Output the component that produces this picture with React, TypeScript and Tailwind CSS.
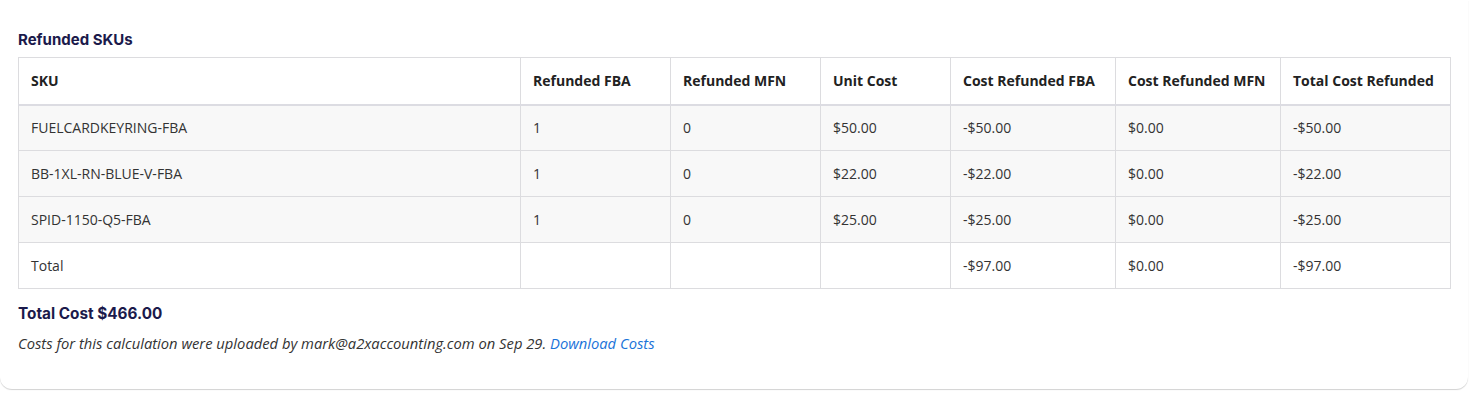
import React from 'react';

type Row = {
  sku: string;
  fba: string;
  mfn: string;
  unit: string;
  costFba: string;
  costMfn: string;
  total: string;
};

const rows: Row[] = [
  { sku: 'FUELCARDKEYRING-FBA', fba: '1', mfn: '0', unit: '$50.00', costFba: '-$50.00', costMfn: '$0.00', total: '-$50.00' },
  { sku: 'BB-1XL-RN-BLUE-V-FBA', fba: '1', mfn: '0', unit: '$22.00', costFba: '-$22.00', costMfn: '$0.00', total: '-$22.00' },
  { sku: 'SPID-1150-Q5-FBA', fba: '1', mfn: '0', unit: '$25.00', costFba: '-$25.00', costMfn: '$0.00', total: '-$25.00' },
];

const headers = [
  'SKU',
  'Refunded FBA',
  'Refunded MFN',
  'Unit Cost',
  'Cost Refunded FBA',
  'Cost Refunded MFN',
  'Total Cost Refunded',
];

const th = 'border border-[#dcdcdf] border-b-2 border-b-[#dcdce2] px-3 text-left font-bold text-[14px] text-[#222]';
const td = 'border border-[#dcdcdf] px-3 text-[14px] text-[#333]';

const App: React.FC = () => {
  return (
    <div className="min-h-screen bg-white font-['Open_Sans',sans-serif]">
      <section className="w-[1468px] bg-white rounded-b-xl shadow-[0_1px_1px_rgba(0,0,0,0.18)] pl-[18px] pt-[30px] pb-[36px]">
        {/* Title */}
        <h2 className="font-['Inter',sans-serif] font-bold text-[15px] leading-5 text-[#1b1a4b] mb-[7px]">
          Refunded SKUs
        </h2>

        <table className="table-fixed border-collapse w-[1432px]">
          <colgroup>
            <col className="w-[502px]" />
            <col className="w-[150px]" />
            <col className="w-[150px]" />
            <col className="w-[130px]" />
            <col className="w-[165px]" />
            <col className="w-[165px]" />
            <col className="w-[170px]" />
          </colgroup>
          <thead>
            <tr className="h-[47px] bg-white">
              {headers.map((h) => (
                <th key={h} className={th}>
                  {h}
                </th>
              ))}
            </tr>
          </thead>
          <tbody>
            {rows.map((r) => (
              <tr key={r.sku} className="h-[46px] bg-[#f8f8f8]">
                <td className={td}>{r.sku}</td>
                <td className={td}>{r.fba}</td>
                <td className={td}>{r.mfn}</td>
                <td className={td}>{r.unit}</td>
                <td className={td}>{r.costFba}</td>
                <td className={td}>{r.costMfn}</td>
                <td className={td}>{r.total}</td>
              </tr>
            ))}
            <tr className="h-[46px] bg-white">
              <td className={td}>Total</td>
              <td className={td}></td>
              <td className={td}></td>
              <td className={td}></td>
              <td className={td}>-$97.00</td>
              <td className={td}>$0.00</td>
              <td className={td}>-$97.00</td>
            </tr>
          </tbody>
        </table>

        <div className="mt-[15px] font-['Inter',sans-serif] font-bold text-[15.3px] leading-5 text-[#1b1a4b]">
          Total Cost $466.00
        </div>
        <p className="mt-[9px] italic text-[14.75px] leading-5 text-[#333]">
          Costs for this calculation were uploaded by mark@a2xaccounting.com on Sep 29.{' '}
          <a href="#" className="text-[#1a73d9]">
            Download Costs
          </a>
        </p>
      </section>
    </div>
  );
};

export default App;
